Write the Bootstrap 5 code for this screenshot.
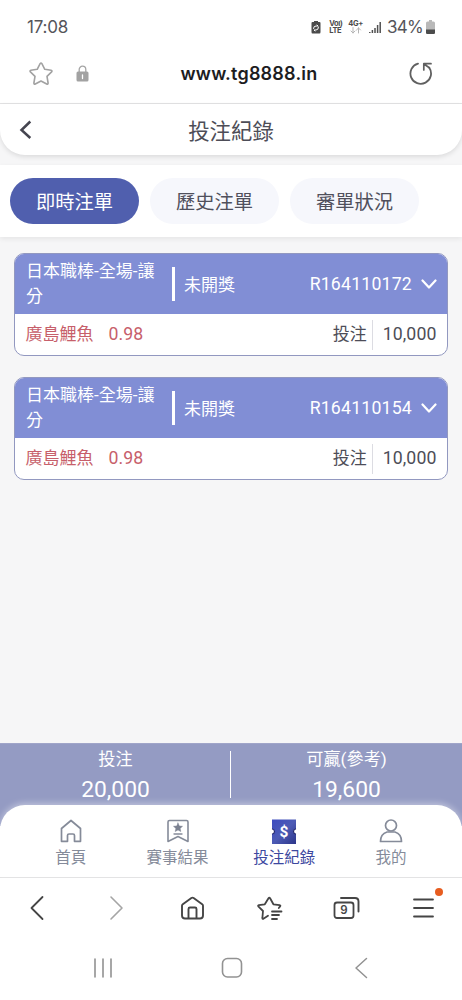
<!DOCTYPE html>
<html lang="zh-Hant">
<head>
<meta charset="utf-8">
<meta name="viewport" content="width=device-width, initial-scale=1">
<title>投注紀錄</title>
<link href="https://cdn.jsdelivr.net/npm/bootstrap@5.3.0/dist/css/bootstrap.min.css" rel="stylesheet">
<style>
body{font-family:Roboto,"Noto Sans CJK TC",sans-serif;background:#f6f6f7;color:#4d4d57;height:1000px;overflow:hidden;line-height:1}
svg{display:block;flex:none;fill:none;stroke-linecap:round;stroke-linejoin:round}
.status-bar{height:54px;padding-left:27px;padding-right:26px;font:400 17px/54px Inter,sans-serif;color:#55555a}
.status-bar .clock{letter-spacing:-.2px}
.status-bar .percent{margin-left:6px;letter-spacing:-.7px}
.tiny{font:700 7.5px/7px Inter,sans-serif;letter-spacing:-.4px;color:#4c4c4c}
.address-bar{height:50px;border-bottom:1px solid #e3e3e4;padding:0 29px 10px 28px}
.address-bar .site{font:600 18px/38px Inter,sans-serif;color:#1d1d1f;letter-spacing:.2px}
.page-head{height:51px;border-radius:0 0 25px 25px;box-shadow:0 2px 5px #0000001c;font-size:21.4px}
.page-head svg{width:16px}
.page-head span{padding:4px 34px 0 0}
.tab-strip{margin-top:10px;height:72px;gap:11px;padding:3px 10px 3px;box-shadow:0 2px 5px #00000012}
.tab-strip .btn{width:129px;height:46px;border:0;padding:3px 0 0;font-size:19.3px;line-height:43px;--bs-btn-bg:#f6f7fc;--bs-btn-color:#50505c}
.tab-strip .btn.active{--bs-btn-active-bg:#505fae;--bs-btn-active-color:#fff}
.tickets{padding:16px 14px 0;gap:21px}
.ticket{height:103px;border:1px solid #9298c0;border-bottom-width:1.5px;border-radius:10px;overflow:hidden;font-size:17px}
.ticket-top{height:60px;background:#818ed5;padding:0 10px 0 11px}
.ticket-top .league{width:146px;line-height:25px}
.ticket-top .bar{width:3px;height:34px;background:#fff;margin-right:9px}
.ticket-top .state{padding-top:2px}
.latin{font-size:17.7px;letter-spacing:.1px}
.ticket-top .latin{letter-spacing:.2px;padding-top:2px}
.ticket-row{height:41px;padding:0 10.5px}
.team{color:#c75f6b}
.amount{border-left:1px solid #dcdce2;height:30px;line-height:29px;padding-left:10px;margin-left:5px}
.totals{height:83px;background:#949bc3;padding-top:3px;border-top:1px solid #a0a5c9;margin-bottom:-21px}
.totals .label-line{font-size:17.2px;line-height:25px}
.totals .sum-line{font-size:22.8px;line-height:36px}
.totals .split{width:1px;height:47px;background:#fff;margin-top:4px;margin-left:-1px}
.app-nav{height:72px;border-radius:25px 25px 0 0;padding:12.5px 17.5px 0;box-shadow:0 -2px 6px #ffffff66;color:#858b9a;font-size:15.5px;z-index:1}
.app-nav a{color:inherit;width:25%;gap:3px}
.app-nav a.current{color:#3d489f}
.app-nav a span{line-height:22px}
.browser-nav{height:61px;border-top:1px solid #e1e1e2}
.browser-nav > div{width:77px}
.browser-nav > div:first-child{padding-right:3px}
.alert-dot{width:8px;height:8px;background:#e75d20;top:-10px;right:-9px}
.system-nav{height:62px;padding:0 37px 3px 39px}
.system-nav > div{width:33.333%}
</style>
</head>
<body class="d-flex flex-column">
<div class="bg-white status-bar d-flex align-items-center justify-content-between">
  <span class="clock">17:08</span>
  <div class="d-flex align-items-center">
    <svg width="10" height="14" viewBox="0 0 10 14"><path d="M3 1h4v1h1.500q1 0 1 1v9q0 1.500-1 1.500h-7q-1 0-1-1.500V3q0-1 1-1H3z" fill="#4b4b4b"/><path d="M2.500 8.500q0-2.500 2.500-2.500h2L6 5M7.500 7q0 3-2.500 3H3l1 1" stroke="#fff"/></svg>
    <div class="tiny ms-2">Voı)<br>LTE</div>
    <div class="tiny text-center" style="margin-left:6px">4G+<svg width="12" height="7" viewBox="0 0 12 7" class="mx-auto"><path d="M3 .5V6M1 4l2 2 2-2M8.500 6V.8M6.500 3l2-2 2 2" stroke="#b5b5b5"/></svg></div>
    <svg width="12" height="13" viewBox="0 0 12 13" style="margin-left:6px"><path d="M.8 12v-1M3.400 12V9M6 12V7M8.600 12V4M11.200 12V1" stroke="#505050" stroke-width="1.500" stroke-linecap="butt"/></svg>
    <span class="percent">34%</span>
    <svg width="9" height="14" viewBox="0 0 9 14" style="margin-left:3px;margin-right:1px"><path d="M3 0h3v1.500h1.500Q9 1.500 9 3v9.500Q9 14 7.500 14h-6Q0 14 0 12.500V3q0-1.500 1.500-1.500H3z" fill="#b9b9b9"/><path d="M0 9.500h9v3q0 1.500-1.500 1.500h-6Q0 14 0 12.500z" fill="#4c4c4c"/></svg>
  </div>
</div>
<div class="bg-white address-bar d-flex align-items-center">
  <svg width="26" height="26" viewBox="0 0 26 26"><path d="M12.100 2.600q.9-1.300 1.800 0l2.900 5.700 6.300 1q1.500.4.500 1.600L19 15.400l1.100 6.600q0 1.500-1.400 1L13 20 7.300 23q-1.400.5-1.400-1L7 15.400l-4.600-4.500q-1-1.200.5-1.600l6.300-1z" stroke="#a2a2a2" stroke-width="1.600"/></svg>
  <svg width="13" height="17" viewBox="0 0 13 17" style="margin-left:22px"><path d="M3.200 7V4.500a3.300 3.300 0 0 1 6.600 0V7" stroke="#a5a5a5" stroke-width="1.300"/><rect x=".5" y="6.500" width="12" height="10" rx="1.500" fill="#a2a2a2"/><path d="M6.500 10v3.500" stroke="#fff" stroke-width="1.300"/></svg>
  <span class="site flex-grow-1 text-center">www.tg8888.in</span>
  <svg width="24" height="24" viewBox="0 0 24 24"><path d="M9 1.600A10.300 10.300 0 1 0 20.300 5.800" stroke="#606060" stroke-width="1.800"/><path d="M14.800 8V1.700H22M15 2l5.300 3.800" stroke="#606060" stroke-width="1.700"/></svg>
</div>
<header class="page-head bg-white d-flex align-items-center">
  <svg width="16" height="20" viewBox="0 0 16 20" style="margin-left:18px"><path d="M12.300 1.500L3.500 10l8.800 8" stroke="#454550" stroke-width="2.500" stroke-linecap="butt" stroke-linejoin="miter"/></svg>
  <span class="flex-grow-1 text-center">投注紀錄</span>
</header>
<nav class="tab-strip bg-white d-flex align-items-center">
  <button class="btn rounded-pill active">即時注單</button>
  <button class="btn rounded-pill">歷史注單</button>
  <button class="btn rounded-pill">審單狀況</button>
</nav>
<main class="tickets d-flex flex-column flex-grow-1">
  <article class="ticket bg-white">
    <div class="ticket-top text-white d-flex align-items-center">
      <div class="league">日本職棒-全場-讓<br>分</div><div class="bar"></div><span class="state">未開獎</span>
      <span class="latin ms-auto">R164110172</span>
      <svg width="16" height="10" viewBox="0 0 16 10" style="margin-left:9px"><path d="M1.500 1.500L8 8.500l6.500-7" stroke="#fff" stroke-width="2.200"/></svg>
    </div>
    <div class="ticket-row d-flex align-items-center">
      <span class="team">廣島鯉魚</span><span class="team latin" style="margin-left:15px">0.98</span>
      <span class="ms-auto">投注</span><span class="amount latin">10,000</span>
    </div>
  </article>
  <article class="ticket bg-white">
    <div class="ticket-top text-white d-flex align-items-center">
      <div class="league">日本職棒-全場-讓<br>分</div><div class="bar"></div><span class="state">未開獎</span>
      <span class="latin ms-auto">R164110154</span>
      <svg width="16" height="10" viewBox="0 0 16 10" style="margin-left:9px"><path d="M1.500 1.500L8 8.500l6.500-7" stroke="#fff" stroke-width="2.200"/></svg>
    </div>
    <div class="ticket-row d-flex align-items-center">
      <span class="team">廣島鯉魚</span><span class="team latin" style="margin-left:15px">0.98</span>
      <span class="ms-auto">投注</span><span class="amount latin">10,000</span>
    </div>
  </article>
</main>
<section class="totals d-flex text-white text-center flex-shrink-0">
  <div class="w-50"><div class="label-line">投注</div><div class="sum-line">20,000</div></div>
  <div class="split"></div>
  <div class="w-50"><div class="label-line">可贏(參考)</div><div class="sum-line">19,600</div></div>
</section>
<nav class="app-nav bg-white d-flex position-relative flex-shrink-0">
  <a class="d-flex flex-column align-items-center text-decoration-none">
    <svg width="24" height="26" viewBox="0 0 24 26"><path d="M2.500 10.500L12 2.500l9.500 8V23.300h-6V17.500q0-1.500-1.500-1.500h-4q-1.500 0-1.500 1.500v5.800h-6z" stroke="#858b99" stroke-width="1.700"/></svg><span>首頁</span></a>
  <a class="d-flex flex-column align-items-center text-decoration-none">
    <svg width="24" height="26" viewBox="0 0 24 26"><path d="M3.500 2.500h17q1.500 0 1.500 1.500v19.500L12 18.500l-10 5V4q0-1.500 1.500-1.500z" stroke="#858b99" stroke-width="1.600"/><path d="M12 5l1.300 3 3.200.3-2.400 2.100.7 3.100L12 11.900l-2.800 1.600.7-3.100-2.400-2.100 3.200-.3z" fill="#7b8190" stroke="#7b8190" stroke-width=".5"/><path d="M8 16h8" stroke="#858b99" stroke-width="1.300"/></svg><span>賽事結果</span></a>
  <a class="current d-flex flex-column align-items-center text-decoration-none">
    <svg width="26" height="26" viewBox="0 0 26 26"><defs><linearGradient id="ticketFill" x1="0" y1="0" x2="1" y2="1"><stop stop-color="#3c4bc0"/><stop offset=".5" stop-color="#4d5bb5"/><stop offset="1" stop-color="#2c3589"/></linearGradient></defs><path d="M1 1.500h24v9.500a2.500 2.500 0 0 0 0 5v10H1V16a2.500 2.500 0 0 0 0-5z" fill="url(#ticketFill)"/><path d="M1.500 11q2 .6 2 2.500T1.500 16M24.500 11q-2 .6-2 2.500t2 2.500" stroke="#25296b" stroke-width="1.200"/><text x="13" y="18.800" text-anchor="middle" font-family="Roboto,sans-serif" font-size="15.500" font-weight="700" fill="#fff">$</text></svg><span>投注紀錄</span></a>
  <a class="d-flex flex-column align-items-center text-decoration-none">
    <svg width="24" height="26" viewBox="0 0 24 26"><circle cx="12" cy="7.500" r="5.500" stroke="#858b99" stroke-width="1.700"/><path d="M1.500 23.500q0-7.500 6.500-9.500h8q6.500 2 6.500 9.500z" stroke="#858b99" stroke-width="1.700"/></svg><span>我的</span></a>
</nav>
<nav class="browser-nav bg-white d-flex align-items-center flex-shrink-0">
  <div class="d-flex justify-content-center"><svg width="16" height="26" viewBox="0 0 16 26"><path d="M13.500 2L2.500 13l11 11" stroke="#454545" stroke-width="1.800"/></svg></div>
  <div class="d-flex justify-content-center"><svg width="16" height="26" viewBox="0 0 16 26"><path d="M3 2l11 11L3 24" stroke="#a5a5a5" stroke-width="1.600"/></svg></div>
  <div class="d-flex justify-content-center"><svg width="24" height="26" viewBox="0 0 24 26"><path d="M4 23.500q-3 0-3-3V10.800q0-1 .8-1.600L10.400 3q1.100-.8 2.200 0l8.600 6.200q.8.600.8 1.600v9.700q0 3-3 3zM7.500 23v-9q0-1.500 1.500-1.500h5q1.500 0 1.500 1.500v9" stroke="#454545" stroke-width="1.900"/></svg></div>
  <div class="d-flex justify-content-center"><svg width="26" height="26" viewBox="0 0 26 26"><path d="M11 20.800l-4.600 3q-1.200.5-1-.8L6 16 1.300 11.400q-.6-1 .5-1.300l6-.8 3.700-6q.8-1.100 1.600 0l3.300 6 6.200.8q1.300.3.500 1.300L21.800 13M15 16.500H24.500M15 20H22M15 24H20" stroke="#454545" stroke-width="1.800"/></svg></div>
  <div class="d-flex justify-content-center"><svg width="27" height="26" viewBox="0 0 27 26"><rect x="1.500" y="7.500" width="19" height="15.500" rx="2.500" stroke="#454545" stroke-width="1.800"/><path d="M8 3h14q3.500 0 3.500 3.500V16.500" stroke="#454545" stroke-width="1.900"/><text x="11" y="19.300" text-anchor="middle" font-family="Inter,sans-serif" font-size="11.500" font-weight="600" fill="#454545">9</text></svg></div>
  <div class="d-flex justify-content-center"><div class="position-relative"><svg width="21" height="20" viewBox="0 0 21 20"><path d="M1 1.500h19M1 10h19M1 18.500h19" stroke="#454545" stroke-width="1.800"/></svg><span class="alert-dot rounded-circle position-absolute"></span></div></div>
</nav>
<nav class="system-nav bg-white d-flex align-items-center flex-shrink-0">
  <div class="d-flex justify-content-center"><svg width="20" height="20" viewBox="0 0 20 20"><path d="M2 1v18M10 1v18M18 1v18" stroke="#929292" stroke-width="1.600"/></svg></div>
  <div class="d-flex justify-content-center"><svg width="22" height="22" viewBox="0 0 22 22"><rect x="1.500" y="1.500" width="19" height="18.500" rx="5" stroke="#929292" stroke-width="1.600"/></svg></div>
  <div class="d-flex justify-content-center"><svg width="14" height="22" viewBox="0 0 14 22"><path d="M12.500 1.500L2 11l10.500 9.500" stroke="#929292" stroke-width="1.500"/></svg></div>
</nav>
<script src="https://cdn.jsdelivr.net/npm/bootstrap@5.3.0/dist/js/bootstrap.bundle.min.js"></script>
</body>
</html>
